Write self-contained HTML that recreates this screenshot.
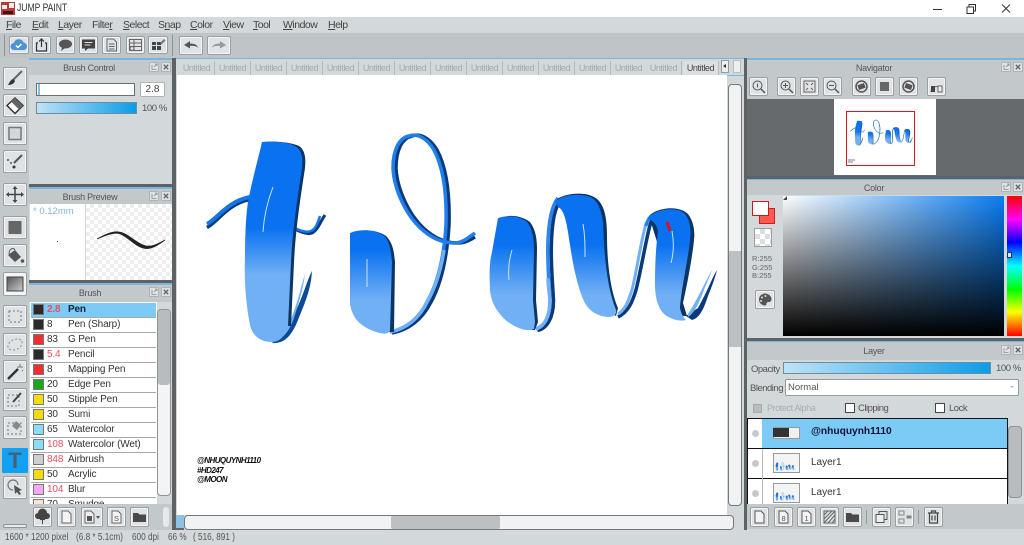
<!DOCTYPE html>
<html><head><meta charset="utf-8"><title>JUMP PAINT</title>
<style>
html,body{margin:0;padding:0;width:1024px;height:545px;overflow:hidden;background:#d3d8da;font-family:"Liberation Sans",sans-serif;color:#444}
div,span,svg,i{position:absolute;box-sizing:border-box}
.t{white-space:nowrap;line-height:1}
.m{font-size:10.5px;top:20px;color:#444;white-space:nowrap;line-height:1;letter-spacing:-.5px}
.b{background:#dfe3e5;border:1.5px solid #9b9fa2;border-radius:2px;box-shadow:inset 0 0 0 1px #f2f4f5}
.b svg{left:0;top:0}
.h{background:#c3c8cb;font-size:9px;color:#555;line-height:16px;letter-spacing:-.25px}
.h span{top:0;transform:translateX(-50%);white-space:nowrap}
.tab{top:61px;height:14px;width:36px;background:#d3d8da;border-right:1px solid #b5b9bc;font-size:9px;color:#a4a8ab;text-align:center;line-height:14px;letter-spacing:-.4px}
.r{left:1px;width:125px;height:15px;background:#fff;border-bottom:1px solid #a5a9ac;font-size:10px;color:#333;line-height:14px;letter-spacing:-.15px}
.r i{left:2px;top:1px;width:11px;height:11px;border:1px solid #777}
.r b{position:absolute;left:16px;top:0;font-weight:normal}
.r u{position:absolute;left:37px;top:0;text-decoration:none}
.red{color:#e8515f}
.l{font-size:9.5px;color:#555;letter-spacing:-.5px}
</style></head>
<body>
<svg style="left:0;top:0" width="0" height="0"><defs>
<symbol id="pc" viewBox="0 0 22 10"><rect x=".5" y=".5" width="9" height="9" fill="#dfe2e4" stroke="#b0b4b7"/><path d="M3 3v4.500h4.500M5 5l3-3M6 2h2v2" fill="none" stroke="#8a8e91" stroke-width=".8"/><rect x="12.500" y=".5" width="9" height="9" fill="#dfe2e4" stroke="#b0b4b7"/><path d="M14.800 2.800l4.400 4.400M19.200 2.800l-4.400 4.400" stroke="#666" stroke-width="1.400"/></symbol>
</defs></svg>
<!-- title -->
<div style="left:0;top:0;width:1024px;height:17px;background:#fff"></div>
<svg style="left:1px;top:2px" width="14" height="13" viewBox="0 0 14 13"><rect width="14" height="13" fill="#b53a3a"/><path d="M1 3h5v4H1zM8 1h5v5H8z" fill="#eee"/><path d="M2 9h10v3H2z" fill="#411"/></svg>
<div class="t" style="left:17px;top:3px;font-size:11px;color:#333;transform:scaleX(.78);transform-origin:left">JUMP PAINT</div>
<svg style="left:930px;top:2px" width="94" height="13" viewBox="0 0 94 13" fill="none" stroke="#333"><path d="M3 7.500h9"/><path d="M37 5h6.500v6.500H37zM39 5V2.500h6.500V9h-2"/><path d="M72 2.500l8 8M80 2.500l-8 8"/></svg>
<!-- menu -->
<div style="left:0;top:17px;width:1024px;height:16px;background:#d3d8da"></div>
<div class="m" style="left:6px"><u>F</u>ile</div><div class="m" style="left:32px"><u>E</u>dit</div><div class="m" style="left:58px"><u>L</u>ayer</div><div class="m" style="left:92px">Filte<u>r</u></div><div class="m" style="left:123px"><u>S</u>elect</div><div class="m" style="left:158px">S<u>n</u>ap</div><div class="m" style="left:190px"><u>C</u>olor</div><div class="m" style="left:223px"><u>V</u>iew</div><div class="m" style="left:253px"><u>T</u>ool</div><div class="m" style="left:283px"><u>W</u>indow</div><div class="m" style="left:328px"><u>H</u>elp</div>
<!-- toolbar -->
<div style="left:0;top:33px;width:1024px;height:25px;background:#bfc4c7"></div>
<div style="left:4px;top:35px;width:1px;height:21px;background:#8f9396"></div>
<div style="left:172px;top:35px;width:1px;height:21px;background:#8f9396"></div>
<div class="b" style="left:9px;top:36px;width:20px;height:18px"><svg width="18" height="16" viewBox="0 0 18 16"><path d="M4 13a3.500 3.500 0 0 1 0-7 5 5 0 0 1 9.500-.5A3.800 3.800 0 0 1 14 13z" fill="#4b94d6"/><path d="M6 8.500l2 2 3.500-3.500" stroke="#fff" stroke-width="1.500" fill="none"/></svg></div>
<div class="b" style="left:32px;top:36px;width:19px;height:18px"><svg width="17" height="16" viewBox="0 0 17 16" fill="none" stroke="#333" stroke-width="1.200"><path d="M5 6H3.500v8h10V6H12M8.500 10V2M6 4.500l2.500-2.500 2.500 2.500"/></svg></div>
<div class="b" style="left:56px;top:36px;width:19px;height:18px"><svg width="17" height="16" viewBox="0 0 17 16"><ellipse cx="8.500" cy="7" rx="6.500" ry="4.500" fill="#555"/><path d="M5 10l-1 4 4-3z" fill="#555"/></svg></div>
<div class="b" style="left:79px;top:36px;width:19px;height:18px"><svg width="17" height="16" viewBox="0 0 17 16"><path d="M2 2.500h13v9H8l-3 2.500v-2.500H2z" fill="#444"/><path d="M4.500 5.500h8M4.500 8h6" stroke="#ddd"/></svg></div>
<div class="b" style="left:102px;top:36px;width:19px;height:18px"><svg width="17" height="16" viewBox="0 0 17 16" fill="none" stroke="#666"><path d="M4 2h6.500L13.500 5v9H4zM6 7h5.500M6 9.500h5.500M6 12h5.500"/></svg></div>
<div class="b" style="left:126px;top:36px;width:19px;height:18px"><svg width="17" height="16" viewBox="0 0 17 16" fill="none" stroke="#666"><path d="M2.500 2.500h12v11h-12zM2.500 6h12M2.500 9.500h12M7 2.500v11"/><circle cx="5" cy="11.500" r="2" fill="#ddd"/></svg></div>
<div class="b" style="left:148px;top:36px;width:20px;height:18px"><svg width="18" height="16" viewBox="0 0 18 16"><path d="M3 5h4v3H3zM8 5h4v3H8zM3 9h4v4H3zM8 9h4v4H8z" fill="#444"/><path d="M11 6l4-4 1.500 1.500-4 4z" fill="#777"/></svg></div>
<div class="b" style="left:179px;top:36px;width:24px;height:19px"><svg width="22" height="17" viewBox="0 0 22 17"><path d="M4 8l6-4v2.500c4 0 7 1 8 4-2-1.500-4-2-8-1.500V11.500z" fill="#555"/></svg></div>
<div class="b" style="left:207px;top:36px;width:24px;height:19px"><svg width="22" height="17" viewBox="0 0 22 17"><path d="M18 8l-6-4v2.500c-4 0-7 1-8 4 2-1.500 4-2 8-1.500V11.500z" fill="#999"/></svg></div>
<!-- left tools -->
<div style="left:0;top:58px;width:29px;height:472px;background:#c3c8cb"></div>
<div class="b" style="left:3px;top:67px;width:24px;height:23px"><svg width="22" height="21" viewBox="0 0 22 21"><path d="M18 3L9 12" stroke="#666" stroke-width="2"/><path d="M9 11l2 2c-1 3-4 4-7 4 1-1 2-5 5-6z" fill="#333"/></svg></div>
<div class="b" style="left:3px;top:94px;width:24px;height:23px"><svg width="22" height="21" viewBox="0 0 22 21"><path d="M11 3l8 7.500-8 8-8-8z" fill="#fff" stroke="#333" stroke-width="1.500"/><path d="M11 3l8 7.500-4 4-8-8z" fill="#666"/></svg></div>
<div class="b" style="left:3px;top:122px;width:24px;height:23px"><svg width="22" height="21" viewBox="0 0 22 21"><rect x="5" y="4.500" width="12" height="12" fill="#d3d8da" stroke="#777" stroke-width="1.500"/></svg></div>
<div class="b" style="left:3px;top:150px;width:24px;height:23px"><svg width="22" height="21" viewBox="0 0 22 21"><path d="M10 12l8-8" stroke="#555" stroke-width="2"/><circle cx="4" cy="9" r="1" fill="#555"/><circle cx="7" cy="12" r="1" fill="#555"/><circle cx="10" cy="16" r="1.500" fill="#333"/></svg></div>
<div class="b" style="left:3px;top:183px;width:24px;height:23px"><svg width="22" height="21" viewBox="0 0 22 21" stroke="#444" stroke-width="1.500" fill="#444"><path d="M11 3v15M3 10.500h16" fill="none"/><path d="M11 2l2.500 3h-5zM11 19l2.500-3h-5zM2 10.500l3-2.500v5zM20 10.500l-3-2.500v5z" stroke="none"/></svg></div>
<div class="b" style="left:3px;top:216px;width:24px;height:23px"><svg width="22" height="21" viewBox="0 0 22 21"><rect x="4.500" y="4" width="13" height="13" fill="#666"/></svg></div>
<div class="b" style="left:3px;top:244px;width:24px;height:23px"><svg width="22" height="21" viewBox="0 0 22 21"><path d="M4 10l7-5 6 7-6 5z" fill="#555"/><path d="M5 9c0-5 4-7 6-4" stroke="#555" fill="none"/><circle cx="18.500" cy="16" r="1.800" fill="#555"/></svg></div>
<div class="b" style="left:3px;top:272px;width:24px;height:24px;background:#f4f5f6"><svg width="22" height="22" viewBox="0 0 22 22"><defs><linearGradient id="gg" x1="0" x2="1" y1="0" y2="1"><stop offset="0" stop-color="#555"/><stop offset="1" stop-color="#ccc"/></linearGradient></defs><rect x="3" y="4" width="16" height="14" fill="url(#gg)" stroke="#444"/></svg></div>
<div class="b" style="left:3px;top:305px;width:24px;height:23px"><svg width="22" height="21" viewBox="0 0 22 21"><rect x="5" y="5" width="12" height="11" fill="none" stroke="#777" stroke-dasharray="2 2"/></svg></div>
<div class="b" style="left:3px;top:333px;width:24px;height:23px"><svg width="22" height="21" viewBox="0 0 22 21"><ellipse cx="11" cy="10.500" rx="7.500" ry="5" transform="rotate(-25 11 10.500)" fill="none" stroke="#888" stroke-dasharray="2 2"/></svg></div>
<div class="b" style="left:3px;top:360px;width:24px;height:23px"><svg width="22" height="21" viewBox="0 0 22 21"><path d="M4 18L14 8" stroke="#333" stroke-width="2.500"/><path d="M16 3v3M13 6h6M18 9l1 1" stroke="#777"/></svg></div>
<div class="b" style="left:3px;top:388px;width:24px;height:23px"><svg width="22" height="21" viewBox="0 0 22 21"><rect x="4" y="6" width="11" height="11" fill="none" stroke="#777" stroke-dasharray="2 2"/><path d="M9 13l8-9" stroke="#444" stroke-width="2"/></svg></div>
<div class="b" style="left:3px;top:416px;width:24px;height:23px"><svg width="22" height="21" viewBox="0 0 22 21"><rect x="4" y="6" width="13" height="11" fill="none" stroke="#777" stroke-dasharray="2 2"/><path d="M12 4l5 4-4 5-5-4z" fill="#888"/></svg></div>
<div style="left:2px;top:448px;width:26px;height:25px;background:#12a0f0;border-radius:1px"></div>
<div class="t" style="left:2px;top:450px;width:26px;text-align:center;font-size:22px;font-weight:bold;color:#4a6072">T</div>
<div class="b" style="left:3px;top:476px;width:24px;height:23px"><svg width="22" height="21" viewBox="0 0 22 21"><path d="M9 13a5 5 0 1 1 5-5" fill="none" stroke="#777" stroke-width="1.200"/><path d="M10 8l8 5-3 1 2 3-2 1-2-3-2 2z" fill="#555"/></svg></div>
<div style="left:3px;top:524px;width:24px;height:4px;background:#e8ebec;border:1px solid #8f9396;border-radius:2px"></div>
<!-- left panels -->
<div style="left:29px;top:58px;width:143px;height:472px;background:#d3d8da"></div>
<div style="left:29px;top:58px;width:147px;height:1.500px;background:#79b6de"></div>
<div class="h" style="left:29px;top:60px;width:143px;height:15px"><span style="left:60px">Brush Control</span></div>
<svg style="left:149px;top:62px" width="22" height="10"><use href="#pc"/></svg>
<div style="left:36px;top:83px;width:99px;height:13px;background:#fff;border:1px solid #6b7073"></div>
<div style="left:38px;top:84px;width:2px;height:11px;background:#7cc0e8"></div>
<div class="t" style="left:140px;top:82px;width:25px;height:15px;background:#fff;border:1px solid #b0b4b7;font-size:10px;text-align:center;line-height:13px;border-radius:2px">2.8</div>
<div style="left:36px;top:102px;width:101px;height:12px;background:linear-gradient(90deg,#bfe2f6,#0b9de8);border:1px solid #6d8da3"></div>
<div class="t" style="left:142px;top:104px;font-size:9.500px;color:#555;letter-spacing:-.4px">100 %</div>
<div style="left:29px;top:184px;width:147px;height:3px;background:#5e6264"></div>
<div style="left:29px;top:187px;width:147px;height:1.500px;background:#79b6de"></div>
<div class="h" style="left:29px;top:189px;width:143px;height:15px"><span style="left:61px">Brush Preview</span></div>
<svg style="left:149px;top:191px" width="22" height="10"><use href="#pc"/></svg>
<div style="left:30px;top:204px;width:55px;height:76px;background:#fff"></div>
<div class="t" style="left:33px;top:207px;font-size:9.500px;color:#7fb6dc">* 0.12mm</div>
<div style="left:57px;top:241px;width:1px;height:1px;background:#555"></div>
<div style="left:86px;top:204px;width:86px;height:76px;background-color:#fff;background-image:linear-gradient(45deg,#eee 25%,transparent 25%,transparent 75%,#eee 75%),linear-gradient(45deg,#eee 25%,transparent 25%,transparent 75%,#eee 75%);background-size:8px 8px;background-position:0 0,4px 4px"></div>
<svg style="left:86px;top:204px" width="86" height="76" viewBox="0 0 86 76"><path d="M11 35C20 30 27 27 33 28C42 29 50 40 60 42C66 43 72 40 79 36C72 41 66 45 60 44.500C50 44 42 32 33 29.500C27 28.500 20 31 11 35z" fill="#222" stroke="#222" stroke-width=".8"/></svg>
<div style="left:29px;top:280px;width:147px;height:3px;background:#5e6264"></div>
<div style="left:29px;top:283px;width:147px;height:1.500px;background:#79b6de"></div>
<div class="h" style="left:29px;top:285px;width:143px;height:17px;line-height:17px"><span style="left:61px">Brush</span></div>
<svg style="left:149px;top:287px" width="22" height="10"><use href="#pc"/></svg>
<div style="left:30px;top:302px;width:127px;height:202px;background:#fff;overflow:hidden">
<div class="r" style="top:1px;background:#7ccaf6;font-weight:bold;color:#123"><i style="background:#2b2b2b"></i><b class="red" style="font-weight:bold">2.8</b><u>Pen</u></div>
<div class="r" style="top:16px"><i style="background:#2b2b2b"></i><b>8</b><u>Pen (Sharp)</u></div>
<div class="r" style="top:31px"><i style="background:#f03030"></i><b>83</b><u>G Pen</u></div>
<div class="r" style="top:46px"><i style="background:#2b2b2b"></i><b class="red">5.4</b><u>Pencil</u></div>
<div class="r" style="top:61px"><i style="background:#f03030"></i><b>8</b><u>Mapping Pen</u></div>
<div class="r" style="top:76px"><i style="background:#18a818"></i><b>20</b><u>Edge Pen</u></div>
<div class="r" style="top:91px"><i style="background:#f2dc10"></i><b>50</b><u>Stipple Pen</u></div>
<div class="r" style="top:106px"><i style="background:#f2dc10"></i><b>30</b><u>Sumi</u></div>
<div class="r" style="top:121px"><i style="background:#8adcf8"></i><b>65</b><u>Watercolor</u></div>
<div class="r" style="top:136px"><i style="background:#8adcf8"></i><b class="red">108</b><u>Watercolor (Wet)</u></div>
<div class="r" style="top:151px"><i style="background:#cfcfcf"></i><b class="red">848</b><u>Airbrush</u></div>
<div class="r" style="top:166px"><i style="background:#f2dc10"></i><b>50</b><u>Acrylic</u></div>
<div class="r" style="top:181px"><i style="background:#f8a8f0"></i><b class="red">104</b><u>Blur</u></div>
<div class="r" style="top:196px"><i style="background:#fbe4d0"></i><b>70</b><u>Smudge</u></div>
</div>
<div style="left:157px;top:309px;width:14px;height:187px;background:#f3f4f5;border:1px solid #8f9396;border-radius:4px"></div>
<div style="left:158px;top:310px;width:12px;height:75px;background:#b8bcbf;border-radius:3px"></div>
<div style="left:29px;top:504px;width:143px;height:26px;background:#c3c8cb"></div>
<div class="b" style="left:33px;top:507px;width:19px;height:20px"><svg width="17" height="18" viewBox="0 0 17 18"><path d="M4 11a3 3 0 0 1 0-6 4.500 4.500 0 0 1 9 0 3 3 0 0 1 0 6z" fill="#444"/><path d="M8.500 16v-6M6 12l2.500-3 2.500 3" stroke="#444" fill="#444"/></svg></div>
<div class="b" style="left:57px;top:507px;width:19px;height:20px"><svg width="17" height="18" viewBox="0 0 17 18"><path d="M4 3h6l3 3v9H4z" fill="#f4f4f4" stroke="#666"/></svg></div>
<div class="b" style="left:81px;top:507px;width:22px;height:20px"><svg width="20" height="18" viewBox="0 0 20 18"><path d="M3 3h6l3 3v9H3z" fill="#eee" stroke="#666"/><rect x="5" y="8" width="5" height="5" fill="#555"/><path d="M14 8h4l-2 3z" fill="#555"/></svg></div>
<div class="b" style="left:107px;top:507px;width:19px;height:20px"><svg width="17" height="18" viewBox="0 0 17 18"><path d="M4 3h6l3 3v9H4z" fill="#f4f4f4" stroke="#666"/><text x="6" y="13" font-size="7.500" fill="#555" font-family="Liberation Sans">S</text></svg></div>
<div class="b" style="left:130px;top:507px;width:19px;height:20px"><svg width="17" height="18" viewBox="0 0 17 18"><path d="M2 5h5l1.500 1.500H15V14H2z" fill="#4a4a4a"/></svg></div>
<div style="left:163px;top:507px;width:6px;height:20px;background:#e6e9ea;border-radius:3px"></div>
<!-- dividers -->
<div style="left:172px;top:58px;width:4px;height:472px;background:#5e6264"></div>
<div style="left:744px;top:58px;width:3px;height:472px;background:#5e6264"></div>
<!-- tabs -->
<div style="left:176px;top:58px;width:568px;height:17px;background:#d3d8da;border-top:1.500px solid #79b6de"></div>
<div class="tab" style="left:179px">Untitled</div><div class="tab" style="left:215px">Untitled</div><div class="tab" style="left:251px">Untitled</div><div class="tab" style="left:287px">Untitled</div><div class="tab" style="left:323px">Untitled</div><div class="tab" style="left:359px">Untitled</div><div class="tab" style="left:395px">Untitled</div><div class="tab" style="left:431px">Untitled</div><div class="tab" style="left:467px">Untitled</div><div class="tab" style="left:503px">Untitled</div><div class="tab" style="left:539px">Untitled</div><div class="tab" style="left:575px">Untitled</div><div class="tab" style="left:611px">Untitled</div><div class="tab" style="left:646px">Untitled</div>
<div class="tab" style="left:683px;width:36px;color:#444;background:#dde0e2">Untitled</div>
<div style="left:721px;top:60px;width:8px;height:13px;background:#eee;border:1px solid #999"></div>
<div style="left:723px;top:64px;border-right:3px solid #333;border-top:2.500px solid transparent;border-bottom:2.500px solid transparent"></div>
<div style="left:733px;top:60px;width:8px;height:13px;background:#eee;border:1px solid #bbb"></div>
<!-- canvas -->
<div style="left:177px;top:75px;width:550px;height:440px;background:#fff"></div>
<div style="left:727px;top:75px;width:17px;height:455px;background:#d3d8da;border-top:1.500px solid #79b6de"></div>
<div style="left:728px;top:84px;width:14px;height:422px;background:#f1f2f3;border:1px solid #777;border-radius:4px"></div>
<div style="left:729px;top:251px;width:12px;height:96px;background:#bcc0c3"></div>
<div style="left:176px;top:515px;width:568px;height:15px;background:#d3d8da"></div>
<div style="left:184px;top:515px;width:550px;height:15px;background:#f1f2f3;border:1px solid #777;border-radius:4px"></div>
<div style="left:391px;top:516px;width:109px;height:13px;background:#bcc0c3;border-radius:2px"></div>
<div style="left:176px;top:515px;width:8px;height:15px;background:#8cc2e4;border-bottom:2px solid #666"></div>
<!-- artwork -->
<svg style="left:0;top:0" width="1024" height="545" viewBox="0 0 1024 545" fill="none">
<defs>
<linearGradient id="g1" gradientUnits="userSpaceOnUse" x1="0" x2="0" y1="228" y2="275"><stop offset="0" stop-color="#0a72f0"/><stop offset="1" stop-color="#72b0f5"/></linearGradient>
<linearGradient id="g2" gradientUnits="userSpaceOnUse" x1="0" x2="0" y1="250" y2="300"><stop offset="0" stop-color="#0a72f0"/><stop offset="1" stop-color="#72b0f5"/></linearGradient>
<linearGradient id="g3" gradientUnits="userSpaceOnUse" x1="0" x2="0" y1="245" y2="295"><stop offset="0" stop-color="#0a72f0"/><stop offset="1" stop-color="#72b0f5"/></linearGradient>
</defs>
<g id="art">
<!-- t -->
<path d="M207 226C218 220 228 202 250 198" stroke="#0b3a78" stroke-width="3.500" transform="translate(0 1.500)"/>
<path d="M207 224C218 218 228 201 250 197" stroke="#1475e8" stroke-width="4"/>
<path d="M293 228C300 232 307 235 312 233C318 230 320 222 325 215" stroke="#0b3a78" stroke-width="3"/>
<path d="M293 227C300 231 306 233 311 231C316 229 318 222 320 216" stroke="#1475e8" stroke-width="2.500"/>
<path d="M272 343C285 344 292 335 298 320C304 305 311 290 312 271C306 282 301 305 288 325Z" fill="#0d4a96"/>
<path d="M272 341C282 341 289 332 294 318C298 305 303 290 305 274C300 290 296 310 288 325Z" fill="#72b0f5"/>
<path d="M264 142C274 141 290 142 299 146C305 150 306 158 305 168C301 195 296 225 294 262L291 326L288 326L288 300L290 200Z" fill="#0b3564"/>
<path d="M262 142C272 141 288 142 295 146C302 150 303 158 302 168C298 195 293 225 291 262L288 326C285 336 280 342 272 342C260 342 252 335 250 325C246 305 244 280 245 258C245 235 246 215 248 202C252 180 258 160 262 142Z" fill="url(#g1)"/>
<path d="M273 187C268 200 264 215 263 232" stroke="#dcecff" stroke-width=".9"/>
<!-- v -->
<path d="M392 333C408 330 422 320 431 302C441 284 447 258 449 225C450 190 445 165 437 150C430 138 420 133 412 136C402 138 396 150 396 168C397 190 410 218 428 232C438 240 448 243 458 243C465 243 470 240 475 237" stroke="#0b3a78" stroke-width="3.500"/>
<path d="M390 332C406 329 420 318 428 300C438 282 444 258 446 225C447 190 442 165 434 150C427 138 417 133 409 136C399 138 393 150 393 168C394 190 407 218 425 232C435 240 445 243 455 243C462 243 468 238 475 233" stroke="#1f7fec" stroke-width="3.500"/>
<path d="M390 332C406 329 420 318 428 300C436 286 441 270 444 250" stroke="#72b0f5" stroke-width="3.500"/>
<path d="M353 232C363 229 378 230 386 236C393 243 394 252 395 262L394 332L385 332Z" fill="#0b3564"/>
<path d="M350 233C360 229 375 229 384 236C390 241 391 252 392 262L390 331C388 334 384 334 380 333C370 331 358 324 354 316C351 310 350 306 350 302Z" fill="url(#g2)"/>
<path d="M367 259L367 287" stroke="#dcecff" stroke-width=".9"/>
<!-- m -->
<path d="M536 330C545 328 552 318 552 300C551 280 549 262 550 240C551 220 553 207 560 198" stroke="#0b3a78" stroke-width="3.500" transform="translate(1.500 .5)"/>
<path d="M536 329C545 326 550 316 550 300C549 280 547 262 548 240C549 222 551 207 558 198" stroke="#2a85ee" stroke-width="3.500"/>
<path d="M536 329C545 326 550 316 550 300C549 290 548 285 548 278" stroke="#72b0f5" stroke-width="3.500"/>
<path d="M500 218C510 214 522 216 530 222C536 230 537 240 537 250L536 300L538 322L535 330L530 330Z" fill="#0b3564"/>
<path d="M498 218C508 215 520 216 527 222C532 228 534 238 534 250L533 300L535 322L534 329C528 332 518 329 508 322C498 314 490 302 490 288C489 270 490 260 492 252Z" fill="url(#g3)"/>
<path d="M512 250C509 260 508 270 509 280" stroke="#dcecff" stroke-width=".9"/>
<path d="M618 317C628 312 632 303 636 290C641 270 646 240 650 225C652 218 656 213 662 211" stroke="#0b3a78" stroke-width="3.500"/>
<path d="M618 314C625 310 628 302 632 290C637 270 641 240 646 224C648 218 652 214 658 212" stroke="#72b0f5" stroke-width="3"/>
<path d="M646 226C648 218 652 214 658 212" stroke="#1f7fec" stroke-width="3"/>
<path d="M557 199C566 193 590 190 599 201C605 208 607 220 607 235C607 260 610 290 618 308L616 316L610 312Z" fill="#0b3564"/>
<path d="M555 201C564 195 578 193 590 197C598 200 601 210 603 222C604 250 606 285 616 310C617 314 614 317 608 317C598 316 590 312 585 303C578 290 573 265 570 245C567 225 565 210 558 207Z" fill="url(#g3)"/>
<path d="M583 224C585 235 585 245 585 257" stroke="#dcecff" stroke-width=".9"/>
<path d="M692 320C700 318 704 308 708 296C712 286 715 278 717 270C712 278 708 290 698 308L686 316Z" fill="#0b3a78"/>
<path d="M688 317C696 312 700 300 704 290C707 282 710 276 712 270C706 280 700 295 688 314Z" fill="#72b0f5"/>
<path d="M649 216C660 206 680 206 688 214C694 222 695 232 694 240C692 260 686 290 683 303L687 316L680 316Z" fill="#0b3564"/>
<path d="M647 218C658 208 676 207 684 213C691 220 691 232 690 240C688 260 681 290 680 308C681 314 684 318 686 320C680 322 670 319 664 314C658 308 655 298 655 285C655 262 656 246 658 232C658 225 652 220 647 218Z" fill="url(#g3)"/>
<path d="M672 231C674 242 674 252 671 263" stroke="#dcecff" stroke-width=".9"/>
</g>
<path d="M667 222L670 231" stroke="#d8141c" stroke-width="3"/>
</svg>
<div class="t" style="left:197px;top:456px;font-size:8px;font-weight:bold;font-style:italic;color:#111;line-height:9.500px;letter-spacing:-.55px">@NHUQUYNH1110<br>#HD247<br>@MOON</div>
<!-- right panels -->
<div style="left:747px;top:58px;width:277px;height:472px;background:#d3d8da"></div>
<div style="left:747px;top:58px;width:277px;height:1.500px;background:#79b6de"></div>
<div class="h" style="left:747px;top:60px;width:277px;height:15px"><span style="left:127px">Navigator</span></div>
<svg style="left:1001px;top:62px" width="22" height="10"><use href="#pc"/></svg>
<div style="left:747px;top:75px;width:277px;height:24px;background:#c3c8cb"></div>
<div class="b" style="left:749px;top:77px;width:19px;height:19px"><svg width="17" height="17" viewBox="0 0 17 17" fill="none" stroke="#555"><circle cx="7.500" cy="7.500" r="4.500"/><path d="M11 11l4 4" stroke-width="1.500"/><path d="M7.500 5.500v4" /></svg></div>
<div class="b" style="left:777px;top:77px;width:19px;height:19px"><svg width="17" height="17" viewBox="0 0 17 17" fill="none" stroke="#555"><circle cx="7.500" cy="7.500" r="4.500"/><path d="M11 11l4 4" stroke-width="1.500"/><path d="M5 7.500h5M7.500 5v5"/></svg></div>
<div class="b" style="left:800px;top:77px;width:19px;height:19px"><svg width="17" height="17" viewBox="0 0 17 17" fill="none" stroke="#666"><rect x="3" y="3" width="11" height="11"/><path d="M5 5l2 2M12 5l-2 2M5 12l2-2M12 12l-2-2"/></svg></div>
<div class="b" style="left:823px;top:77px;width:19px;height:19px"><svg width="17" height="17" viewBox="0 0 17 17" fill="none" stroke="#555"><circle cx="7.500" cy="7.500" r="4.500"/><path d="M11 11l4 4" stroke-width="1.500"/><path d="M5 7.500h5"/></svg></div>
<div class="b" style="left:852px;top:77px;width:19px;height:19px"><svg width="17" height="17" viewBox="0 0 17 17"><circle cx="8.500" cy="8.500" r="5.500" fill="none" stroke="#555" stroke-width="1.500"/><rect x="5" y="6" width="7" height="5" fill="#555" transform="rotate(-20 8.500 8.500)"/></svg></div>
<div class="b" style="left:875px;top:77px;width:19px;height:19px"><svg width="17" height="17" viewBox="0 0 17 17"><rect x="4" y="4" width="9" height="9" fill="#666"/></svg></div>
<div class="b" style="left:899px;top:77px;width:19px;height:19px"><svg width="17" height="17" viewBox="0 0 17 17"><circle cx="8.500" cy="8.500" r="5.500" fill="none" stroke="#555" stroke-width="1.500"/><rect x="5" y="6" width="7" height="5" fill="#555" transform="rotate(20 8.500 8.500)"/></svg></div>
<div class="b" style="left:927px;top:77px;width:19px;height:19px"><svg width="17" height="17" viewBox="0 0 17 17"><path d="M3 14a5.500 5.500 0 0 1 11 0" fill="none" stroke="#666"/><rect x="3" y="8" width="4" height="6" fill="#444"/><rect x="10" y="8" width="4" height="6" fill="#eee" stroke="#666"/></svg></div>
<div style="left:747px;top:99px;width:277px;height:77px;background:#666a6d"></div>
<div style="left:834px;top:99px;width:102px;height:76px;background:#fff"></div>
<div style="left:846px;top:111px;width:69px;height:55px;border:1.500px solid #d31a24"></div>
<svg style="left:0;top:0" width="1024" height="545" viewBox="0 0 1024 545" fill="none">
<use href="#art" transform="translate(824.800 103.400) scale(.123)"/>
<path d="M848 160h7M848 162h5" stroke="#555" stroke-width=".7"/></svg>
<div style="left:747px;top:176px;width:277px;height:2.500px;background:#5e6264"></div>
<div style="left:747px;top:178.500px;width:277px;height:1.500px;background:#79b6de"></div>
<div class="h" style="left:747px;top:180px;width:277px;height:15px"><span style="left:127px">Color</span></div>
<svg style="left:1001px;top:182px" width="22" height="10"><use href="#pc"/></svg>
<div style="left:759px;top:208px;width:16px;height:16px;background:#f85a50;border:1.500px solid #d31a24"></div>
<div style="left:752px;top:201px;width:17px;height:15px;background:#fff;border:1.500px solid #c81820"></div>
<div style="left:754px;top:228px;width:18px;height:19px;border:1px solid #9b9fa2;background-color:#fff;background-image:linear-gradient(45deg,#ddd 25%,transparent 25%,transparent 75%,#ddd 75%),linear-gradient(45deg,#ddd 25%,transparent 25%,transparent 75%,#ddd 75%);background-size:10px 10px;background-position:0 0,5px 5px"></div>
<div class="t" style="left:752px;top:255px;font-size:7.500px;line-height:8.500px;color:#666">R:255<br>G:255<br>B:255</div>
<div class="b" style="left:755px;top:290px;width:20px;height:19px"><svg width="18" height="17" viewBox="0 0 18 17"><path d="M9 2.500a6 6 0 1 0 0 12c2 0 1-2 2-3s4 .5 4.500-3A6.500 6 0 0 0 9 2.500z" fill="#555"/><circle cx="6" cy="6.500" r="1" fill="#ddd"/><circle cx="9.500" cy="5" r="1" fill="#ddd"/><circle cx="5" cy="10" r="1" fill="#ddd"/></svg></div>
<div style="left:783px;top:196px;width:221px;height:140px;background:linear-gradient(to bottom,rgba(0,0,0,0),#000),linear-gradient(to right,#fff,#0a7cf0)"></div>
<div style="left:1007px;top:196px;width:15px;height:140px;background:linear-gradient(to bottom,#ff0000 0%,#ff00ff 17%,#0000ff 33%,#00ffff 50%,#00ff00 67%,#ffff00 83%,#ff0000 100%)"></div>
<div style="left:1007px;top:252px;width:5px;height:6px;border:1px solid #236;background:#cfe6fa"></div>
<div style="left:783px;top:196px;width:4px;height:4px;background:#444;clip-path:polygon(0 100%,100% 0,100% 100%)"></div>
<div style="left:747px;top:338px;width:277px;height:2.500px;background:#5e6264"></div>
<div style="left:747px;top:340.500px;width:277px;height:1.500px;background:#79b6de"></div>
<div class="h" style="left:747px;top:342px;width:277px;height:18px;line-height:18px"><span style="left:127px">Layer</span></div>
<svg style="left:1001px;top:345px" width="22" height="10"><use href="#pc"/></svg>
<div class="t l" style="left:751px;top:365px">Opacity</div>
<div style="left:783px;top:362px;width:208px;height:12px;background:linear-gradient(90deg,#bfe2f6,#0b9de8);border:1px solid #6d8da3"></div>
<div class="t" style="left:996px;top:364px;font-size:9.500px;color:#555;letter-spacing:-.4px">100 %</div>
<div class="t l" style="left:750px;top:384px">Blending</div>
<div class="t" style="left:785px;top:379px;width:234px;height:17px;background:#fff;border:1px solid #999;border-radius:2px;font-size:9.500px;line-height:16px;padding-left:2px;color:#555">Normal</div>
<div style="left:1010px;top:386px;border-top:2.500px solid #bbb;border-left:2.500px solid transparent;border-right:2.500px solid transparent"></div>
<div style="left:753px;top:404px;width:9px;height:9px;background:#bbb;border:1px solid #aaa"></div>
<div class="t" style="left:767px;top:404px;font-size:9px;color:#a8acaf;letter-spacing:-.4px">Protect Alpha</div>
<div style="left:845px;top:403px;width:10px;height:10px;background:#fff;border:1px solid #444"></div>
<div class="t l" style="left:858px;top:404px">Clipping</div>
<div style="left:935px;top:403px;width:10px;height:10px;background:#fff;border:1px solid #444"></div>
<div class="t l" style="left:949px;top:404px">Lock</div>
<!-- layers -->
<div style="left:747px;top:418px;width:261px;height:87px;background:#fff;overflow:hidden">
<div style="left:0;top:0;width:261px;height:31px;background:#fff;border:1px solid #111"></div>
<div style="left:15px;top:1px;width:245px;height:29px;background:#7ccaf6"></div>
<div style="left:0;top:30px;width:261px;height:31px;border:1px solid #111"></div>
<div style="left:0;top:60px;width:261px;height:40px;border:1px solid #111"></div>
<div style="left:15px;top:31px;width:1px;height:60px;background:#bbb"></div>
<div style="left:4.500px;top:12px;width:7px;height:7px;border-radius:50%;background:#c6c9cb"></div>
<div style="left:4.500px;top:42px;width:7px;height:7px;border-radius:50%;background:#c6c9cb"></div>
<div style="left:4.500px;top:72px;width:7px;height:7px;border-radius:50%;background:#c6c9cb"></div>
<div style="left:26px;top:9px;width:27px;height:12px;background:#f0f0f0;border:1px solid #999"></div>
<div style="left:26px;top:10px;width:16px;height:9px;background:#333"></div>
<div class="t" style="left:64px;top:8.500px;font-size:10.200px;font-weight:bold;color:#113">@nhuquynh1110</div>
<div style="left:26px;top:35px;width:27px;height:20px;background:#f2f4f6;border:1px solid #999"></div>
<div class="t" style="left:64px;top:39.500px;font-size:10px;color:#333">Layer1</div>
<div style="left:26px;top:65px;width:27px;height:20px;background:#f2f4f6;border:1px solid #999"></div>
<div class="t" style="left:64px;top:69.500px;font-size:10px;color:#333">Layer1</div>
</div>
<svg style="left:0;top:0" width="1024" height="545" viewBox="0 0 1024 545" fill="none">
<use href="#art" transform="translate(766 457) scale(.04)"/>
<use href="#art" transform="translate(766 487) scale(.04)"/>
</svg>
<div style="left:1008px;top:426px;width:14px;height:72px;background:#b8bcbf;border:1px solid #8f9396;border-radius:4px"></div>
<div style="left:747px;top:504px;width:277px;height:25px;background:#c3c8cb"></div>
<div class="b" style="left:750px;top:507px;width:19px;height:20px"><svg width="17" height="18" viewBox="0 0 17 18"><path d="M4 3h6l3 3v9H4z" fill="#f4f4f4" stroke="#555"/></svg></div>
<div class="b" style="left:774px;top:507px;width:19px;height:20px"><svg width="17" height="18" viewBox="0 0 17 18"><path d="M4 3h6l3 3v9H4z" fill="#f4f4f4" stroke="#555"/><text x="6.500" y="13" font-size="7.500" fill="#555" font-family="Liberation Sans">8</text></svg></div>
<div class="b" style="left:797px;top:507px;width:19px;height:20px"><svg width="17" height="18" viewBox="0 0 17 18"><path d="M4 3h6l3 3v9H4z" fill="#f4f4f4" stroke="#555"/><text x="6.500" y="13" font-size="7.500" fill="#555" font-family="Liberation Sans">1</text></svg></div>
<div class="b" style="left:820px;top:507px;width:19px;height:20px"><svg width="17" height="18" viewBox="0 0 17 18" fill="none" stroke="#666"><rect x="3" y="3" width="11" height="12"/><path d="M3 7l4-4M3 11l8-8M3 15l11-12M7 15l7-8M11 15l3-4"/></svg></div>
<div class="b" style="left:843px;top:507px;width:19px;height:20px"><svg width="17" height="18" viewBox="0 0 17 18"><path d="M2 5h5l1.500 1.500H15V14H2z" fill="#4a4a4a"/></svg></div>
<div style="left:866px;top:510px;width:1px;height:14px;background:#999"></div>
<div class="b" style="left:872px;top:507px;width:19px;height:20px"><svg width="17" height="18" viewBox="0 0 17 18" fill="none" stroke="#555"><rect x="6" y="3.500" width="8" height="8"/><rect x="3" y="6.500" width="8" height="8" fill="#eee"/></svg></div>
<div class="b" style="left:895px;top:507px;width:19px;height:20px"><svg width="17" height="18" viewBox="0 0 17 18" fill="none" stroke="#888"><rect x="3" y="3" width="5" height="4"/><rect x="3" y="11" width="5" height="4"/><path d="M11 8h4v2h-4z" fill="#777"/></svg></div>
<div style="left:918px;top:510px;width:1px;height:14px;background:#999"></div>
<div class="b" style="left:924px;top:507px;width:19px;height:20px"><svg width="17" height="18" viewBox="0 0 17 18" fill="none" stroke="#444" stroke-width="1.200"><path d="M3 5h11M6.500 5V3h4v2M4.500 5v10h8V5M7 7.500v5M10 7.500v5"/></svg></div>
<!-- status -->
<div style="left:0;top:530px;width:1024px;height:15px;background:#d3d8da"></div>
<div class="t" style="left:5px;top:533px;font-size:10px;color:#555;transform:scaleX(.82);transform-origin:left">1600 * 1200 pixel</div>
<div class="t" style="left:76px;top:533px;font-size:10px;color:#555;transform:scaleX(.82);transform-origin:left">(6.8 * 5.1cm)</div>
<div class="t" style="left:132px;top:533px;font-size:10px;color:#555;transform:scaleX(.82);transform-origin:left">600 dpi</div>
<div class="t" style="left:168px;top:533px;font-size:10px;color:#555;transform:scaleX(.82);transform-origin:left">66 %</div>
<div class="t" style="left:193px;top:533px;font-size:10px;color:#555;transform:scaleX(.82);transform-origin:left">( 516, 891 )</div>
</body></html>
